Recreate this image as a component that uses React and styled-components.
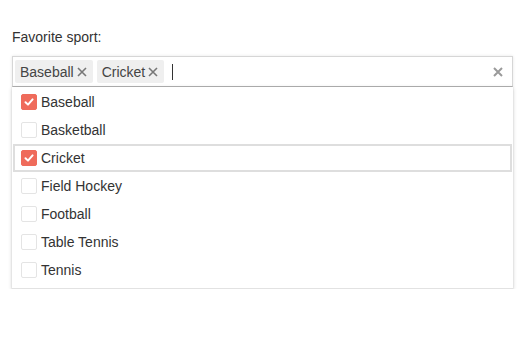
import React, { useState } from 'react';
import styled, { createGlobalStyle } from 'styled-components';

const GlobalStyle = createGlobalStyle`
    body {
        margin: 0;
        background: #fff;
        font-family: "Liberation Sans", Arial, sans-serif;
    }
`;

const Wrapper = styled.div`
    padding: 28px 10px 0 12px;
    width: 501px;
`;

const Label = styled.div`
    font-size: 14px;
    line-height: 18px;
    color: #333;
    margin-bottom: 10px;
`;

const Control = styled.div`
    height: 31px;
    box-sizing: border-box;
    border: 1px solid #d6d6d6;
    border-bottom-color: #b8b8b8;
    box-shadow: 0 0 3px rgba(0, 0, 0, 0.1);
    display: flex;
    align-items: center;
    padding: 0 9px 0 2px;
    gap: 4px;
`;

const Chip = styled.span`
    display: inline-flex;
    align-items: center;
    height: 23px;
    padding: 0 6px 0 5px;
    gap: 3px;
    background: #efefef;
    border-radius: 2px;
    font-size: 14px;
    color: #444;
`;

const Caret = styled.span`
    width: 1px;
    height: 16px;
    background: #333;
    margin-left: 4px;
`;

const Spacer = styled.div`
    flex: 1;
`;

const Menu = styled.div`
    padding: 1px 0 4px;
    background: #fff;
    border-bottom: 1px solid #e2e2e2;
    box-shadow: 0 1px 4px rgba(0, 0, 0, 0.2), 0 0 1px rgba(0, 0, 0, 0.15);
`;

const Row = styled.div`
    height: 28px;
    box-sizing: border-box;
    margin: 0 1px;
    padding-left: 6px;
    border: 2px solid ${(p) => (p.$active ? '#dedede' : 'transparent')};
    display: flex;
    align-items: center;
    gap: 4px;
    font-size: 14px;
    color: #333;
`;

const Box = styled.span`
    width: 16px;
    height: 16px;
    box-sizing: border-box;
    border-radius: 2px;
    border: 1px solid ${(p) => (p.$checked ? '#ef6b5b' : '#e4e4e4')};
    background: ${(p) => (p.$checked ? '#ef6b5b' : '#fff')};
    display: flex;
    align-items: center;
    justify-content: center;
`;

const sports = ['Baseball', 'Basketball', 'Cricket', 'Field Hockey', 'Football', 'Table Tennis', 'Tennis'];

function Cross({ size, color, width }) {
    return (
        <svg width={size} height={size} viewBox="0 0 10 10">
            <path d="M1 1L9 9M9 1L1 9" stroke={color} strokeWidth={width} fill="none" />
        </svg>
    );
}

export default function App() {
    const [selected] = useState(['Baseball', 'Cricket']);
    const active = 'Cricket';

    return (
        <Wrapper>
            <GlobalStyle />
            <Label>Favorite sport:</Label>
            <Control>
                {selected.map((s) => (
                    <Chip key={s}>
                        {s}
                        <Cross size={10} color="#777" width={1.6} />
                    </Chip>
                ))}
                <Caret />
                <Spacer />
                <Cross size={10} color="#9a9a9a" width={2} />
            </Control>
            <Menu>
                {sports.map((s) => {
                    const checked = selected.includes(s);
                    return (
                        <Row key={s} $active={s === active}>
                            <Box $checked={checked}>
                                {checked && (
                                    <svg width="12" height="12" viewBox="0 0 12 12">
                                        <path d="M2.5 6.2L5 8.6L9.6 3.4" stroke="#fff" strokeWidth="2" fill="none" strokeLinecap="round" strokeLinejoin="round" />
                                    </svg>
                                )}
                            </Box>
                            {s}
                        </Row>
                    );
                })}
            </Menu>
        </Wrapper>
    );
}
